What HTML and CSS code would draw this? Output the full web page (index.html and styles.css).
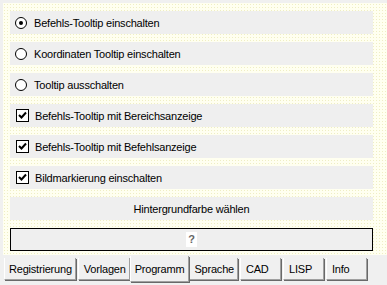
FILE: index.html
```html
<!DOCTYPE html>
<html lang="de">
	<head>
		<meta charset="UTF-8" />
		<title>Programm</title>
		<link rel="stylesheet" href="styles.css">
	</head>
	<body>
		<div class="panel">
			<label class="row">
				<span class="radio checked"></span>
				<span>Befehls-Tooltip einschalten</span>
			</label>
			<label class="row">
				<span class="radio"></span>
				<span>Koordinaten Tooltip einschalten</span>
			</label>
			<label class="row">
				<span class="radio"></span>
				<span>Tooltip ausschalten</span>
			</label>
			<label class="row">
				<span class="check"><svg width="9" height="9" viewBox="0 0 9 9"><path d="M1 4 L3.5 6.5 L8 1.5" fill="none" stroke="#000" stroke-width="2"/></svg></span>
				<span>Befehls-Tooltip mit Bereichsanzeige</span>
			</label>
			<label class="row">
				<span class="check"><svg width="9" height="9" viewBox="0 0 9 9"><path d="M1 4 L3.5 6.5 L8 1.5" fill="none" stroke="#000" stroke-width="2"/></svg></span>
				<span>Befehls-Tooltip mit Befehlsanzeige</span>
			</label>
			<label class="row">
				<span class="check"><svg width="9" height="9" viewBox="0 0 9 9"><path d="M1 4 L3.5 6.5 L8 1.5" fill="none" stroke="#000" stroke-width="2"/></svg></span>
				<span>Bildmarkierung einschalten</span>
			</label>
			<div class="row button">Hintergrundfarbe wählen</div>
			<div class="swatch"><span class="swatch-icon">?</span></div>
		</div>
		<div class="tabs">
			<div class="tab">Registrierung</div>
			<div class="tab">Vorlagen</div>
			<div class="tab active">Programm</div>
			<div class="tab">Sprache</div>
			<div class="tab">CAD</div>
			<div class="tab">LISP</div>
			<div class="tab">Info</div>
		</div>
	</body>
</html>
```

FILE: styles.css
```css
body {
	margin: 0;
	background-color: #f0f0f0;
	font-family: "Liberation Sans", Arial, sans-serif;
	font-size: 11px;
	letter-spacing: -0.2px;
	color: #000;
}
.panel {
	margin: 3px 0 0 3px;
	height: 252px;
	box-sizing: border-box;
	padding: 8px 14px 0 7px;
	display: flex;
	flex-direction: column;
	gap: 8px;
	background-color: #fffff0;
	background-image: radial-gradient(#efeec4 0.7px, transparent 0.9px);
	background-size: 3px 3px;
}
.row {
	height: 23px;
	display: flex;
	align-items: center;
	gap: 7px;
	padding-left: 5px;
	background-color: #efefef;
}
.radio {
	width: 10px;
	height: 10px;
	border: 1px solid #000;
	border-radius: 50%;
	background-color: #fff;
	display: flex;
	align-items: center;
	justify-content: center;
}
.radio.checked::after {
	content: '';
	width: 4px;
	height: 4px;
	border-radius: 50%;
	background-color: #000;
}
.check {
	width: 11px;
	height: 11px;
	margin-left: 1px;
	border: 1px solid #000;
	background-color: #fff;
	display: flex;
	align-items: center;
	justify-content: center;
	margin-right: -1px;
}
.button {
	justify-content: center;
	padding-left: 0;
}
.swatch {
	height: 23px;
	box-sizing: border-box;
	border: 1px solid #000;
	background-color: #efefef;
	display: flex;
	align-items: center;
	justify-content: center;
}
.swatch-icon {
	width: 11px;
	height: 15px;
	background-color: #fff;
	color: #666;
	font-weight: bold;
	text-align: center;
	line-height: 15px;
}
.tabs {
	display: flex;
	align-items: flex-start;
	padding-left: 4px;
	height: 30px;
}
.tab {
	margin-top: 3px;
	height: 22px;
	min-width: 41px;
	box-sizing: border-box;
	padding: 5px 3px 0 5px;
	border: 1px solid #fff;
	border-top: none;
	border-right-color: #a0a0a0;
	border-bottom-color: #a0a0a0;
	box-shadow: 1px 1px 0 #696969;
	margin-right: 2px;
}
.tab:first-child {
	padding-left: 4px;
}
.tab.active {
	margin: 1px 0 0 -2px;
	height: 26px;
	padding: 7px 4px 0;
	background-color: #f0f0f0;
	z-index: 1;
}
.tab.active + .tab {
	margin-left: -1px;
}
```
